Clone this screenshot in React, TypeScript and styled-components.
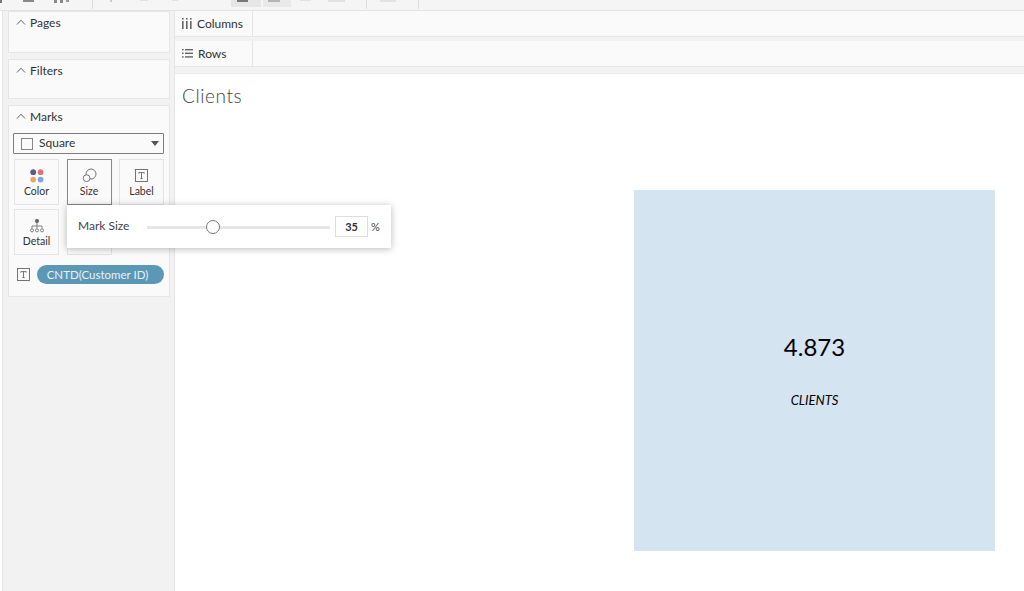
import React from 'react';
import styled, { createGlobalStyle } from 'styled-components';

const GlobalStyle = createGlobalStyle`
  html, body {
    margin: 0;
    padding: 0;
    height: 100%;
    background: #fff;
    font-family: "Lato", "Liberation Sans", sans-serif;
    overflow: hidden;
  }
`;

const Chevron = () => (
  <svg width="10" height="6" viewBox="0 0 10 6" fill="none" stroke="#666" strokeWidth="1">
    <path d="M1 5.5 L5 1.2 L9 5.5" />
  </svg>
);

const ColumnsIcon = () => (
  <svg width="10" height="11" viewBox="0 0 10 11" fill="#666">
    <rect x="0" y="0" width="1.6" height="1.6" />
    <rect x="0" y="3" width="1.6" height="8" />
    <rect x="4" y="0" width="1.6" height="1.6" />
    <rect x="4" y="3" width="1.6" height="8" />
    <rect x="8" y="0" width="1.6" height="1.6" />
    <rect x="8" y="3" width="1.6" height="8" />
  </svg>
);

const RowsIcon = () => (
  <svg width="11" height="9" viewBox="0 0 11 9" fill="#666">
    <rect x="0" y="0" width="1.6" height="1.4" />
    <rect x="3" y="0" width="8" height="1.4" />
    <rect x="0" y="3.6" width="1.6" height="1.4" />
    <rect x="3" y="3.6" width="8" height="1.4" />
    <rect x="0" y="7.2" width="1.6" height="1.4" />
    <rect x="3" y="7.2" width="8" height="1.4" />
  </svg>
);

const ColorIcon = () => (
  <svg width="14" height="14" viewBox="0 0 14 14">
    <circle cx="3.2" cy="3.2" r="2.9" fill="#5b5a8c" />
    <circle cx="10.6" cy="3.2" r="2.9" fill="#e2707a" />
    <circle cx="3.2" cy="10.6" r="2.9" fill="#eda66a" />
    <circle cx="10.6" cy="10.6" r="2.9" fill="#7fa6d6" />
  </svg>
);

const SizeIcon = () => (
  <svg width="15" height="15" viewBox="0 0 15 15" fill="none" stroke="#666" strokeWidth="0.9">
    <circle cx="9" cy="6" r="5" />
    <circle cx="4.6" cy="10.2" r="3.4" fill="#fafafa" />
  </svg>
);

const TextBoxIcon = ({ size }: { size: number }) => (
  <svg width={size} height={size} viewBox="0 0 13 13" fill="none" stroke="#666">
    <rect x="0.5" y="0.5" width="12" height="12" strokeWidth="0.9" />
    <path d="M3.8 4.6 V3.6 H9.2 V4.6 M6.5 3.6 V9.6 M5.3 9.6 H7.7" strokeWidth="0.9" />
  </svg>
);

const DetailIcon = () => (
  <svg width="14" height="14" viewBox="0 0 14 14" fill="none" stroke="#666" strokeWidth="0.8">
    <circle cx="7" cy="2" r="1.7" fill="#666" />
    <path d="M7 3.5 V7 M2 9.6 V7 H12 V9.6 M7 7 V9.6" />
    <circle cx="2" cy="11.4" r="1.5" />
    <circle cx="7" cy="11.4" r="1.5" />
    <circle cx="12" cy="11.4" r="1.5" />
  </svg>
);

export default function App() {
  return (
    <Page>
      <GlobalStyle />
      <Toolbar>
        <Tick $ml={0} $w={2} $h={3} $c="#777" />
        <Tick $ml={21} $w={11} $h={2} $c="#888" />
        <Tick $ml={20} $w={3} $h={3} $c="#888" />
        <Tick $ml={3} $w={3} $h={3} $c="#888" />
        <Tick $ml={3} $w={3} $h={2} $c="#999" />
        <Separator $ml={23} />
        <Tick $ml={17} $w={2} $h={2} $c="#ccc" />
        <Tick $ml={28} $w={8} $h={1} $c="#e2e2e2" />
        <Tick $ml={24} $w={6} $h={1} $c="#e2e2e2" />
        <ToolButton $ml={53} $w={30} $light={false}>
          <Tick $ml={6} $w={11} $h={2} $c="#777" />
        </ToolButton>
        <ToolButton $ml={2} $w={28} $light>
          <Tick $ml={5} $w={12} $h={2} $c="#b5b5b5" />
        </ToolButton>
        <Tick $ml={9} $w={11} $h={1} $c="#e2e2e2" />
        <Tick $ml={17} $w={17} $h={2} $c="#e2e2e2" />
        <Separator $ml={21} />
        <Tick $ml={13} $w={16} $h={2} $c="#e2e2e2" />
        <Separator $ml={22} />
      </Toolbar>
      <Workspace>
        <Gutter />
        <Sidebar>
          <Card $h={42}>
            <CardTitle><Chevron />Pages</CardTitle>
          </Card>
          <Card $h={40}>
            <CardTitle><Chevron />Filters</CardTitle>
          </Card>
          <MarksCard>
            <CardTitle><Chevron />Marks</CardTitle>
            <MarkSelect>
              <SquareBox />
              <SelectText>Square</SelectText>
              <Caret />
            </MarkSelect>
            <MarkGrid>
              <MarkButton>
                <IconSlot><ColorIcon /></IconSlot>
                Color
              </MarkButton>
              <MarkButton $active>
                <IconSlot><SizeIcon /></IconSlot>
                Size
              </MarkButton>
              <MarkButton>
                <IconSlot><TextBoxIcon size={13} /></IconSlot>
                Label
              </MarkButton>
              <MarkButton>
                <IconSlot><DetailIcon /></IconSlot>
                Detail
              </MarkButton>
              <MarkButton />
            </MarkGrid>
            <PillRow>
              <TextBoxIcon size={13} />
              <Pill>CNTD(Customer ID)</Pill>
            </PillRow>
            <SizePopup>
              <PopupLabel>Mark Size</PopupLabel>
              <SliderTrack>
                <SliderThumb />
              </SliderTrack>
              <SizeInput>35</SizeInput>
              <Percent>%</Percent>
            </SizePopup>
          </MarksCard>
        </Sidebar>
        <Main>
          <Shelf>
            <ShelfLabel><ColumnsIcon />Columns</ShelfLabel>
          </Shelf>
          <Shelf>
            <ShelfLabel><RowsIcon />Rows</ShelfLabel>
          </Shelf>
          <Canvas>
            <ViewTitle>Clients</ViewTitle>
            <MarkSquare>
              <BigNumber>4.873</BigNumber>
              <SmallCaption>CLIENTS</SmallCaption>
            </MarkSquare>
          </Canvas>
        </Main>
      </Workspace>
    </Page>
  );
}

const Page = styled.div`
  width: 1024px;
  height: 591px;
  display: flex;
  flex-direction: column;
  overflow: hidden;
  background: #fff;
`;

const Toolbar = styled.div`
  height: 11px;
  box-sizing: border-box;
  flex: none;
  display: flex;
  align-items: flex-start;
  background: #f5f5f5;
  border-bottom: 1px solid #e3e3e3;
`;

const Tick = styled.span<{ $ml: number; $w: number; $h: number; $c: string }>`
  flex: none;
  margin-left: ${(p) => p.$ml}px;
  width: ${(p) => p.$w}px;
  height: ${(p) => p.$h}px;
  background: ${(p) => p.$c};
`;

const Separator = styled.span<{ $ml: number }>`
  flex: none;
  margin-left: ${(p) => p.$ml}px;
  width: 1px;
  height: 9px;
  background: #dcdcdc;
`;

const ToolButton = styled.span<{ $ml: number; $w: number; $light: boolean }>`
  flex: none;
  display: flex;
  margin-left: ${(p) => p.$ml}px;
  width: ${(p) => p.$w}px;
  height: 7px;
  background: ${(p) => (p.$light ? '#e9e9e9' : '#e6e6e6')};
`;

const Workspace = styled.div`
  flex: 1;
  display: flex;
  min-height: 0;
`;

const Gutter = styled.div`
  width: 2px;
  flex: none;
  background: #fff;
`;

const Sidebar = styled.div`
  width: 173px;
  flex: none;
  box-sizing: border-box;
  padding: 0 4px 0 5px;
  display: flex;
  flex-direction: column;
  gap: 6px;
  background: #f2f2f2;
  border-left: 1px solid #e4e4e4;
  border-right: 1px solid #e4e4e4;
`;

const Card = styled.div<{ $h: number }>`
  height: ${(p) => p.$h}px;
  box-sizing: border-box;
  background: #fafafa;
  border: 1px solid #e6e6e6;
`;

const MarksCard = styled.div`
  position: relative;
  height: 192px;
  box-sizing: border-box;
  background: #fafafa;
  border: 1px solid #e6e6e6;
`;

const CardTitle = styled.div`
  height: 20px;
  display: flex;
  align-items: center;
  gap: 4px;
  padding-left: 7px;
  box-sizing: border-box;
  font-size: 12px;
  color: #333;
`;

const MarkSelect = styled.div`
  margin: 7px 5px 0 4px;
  height: 21px;
  box-sizing: border-box;
  display: flex;
  align-items: center;
  padding: 0 4px 0 7px;
  background: #fafafa;
  border: 1px solid #7d7d7d;
  border-radius: 1px;
`;

const SquareBox = styled.span`
  width: 12px;
  height: 12px;
  box-sizing: border-box;
  border: 1px solid #888;
  flex: none;
`;

const SelectText = styled.span`
  flex: 1;
  margin: 0 0 2px 6px;
  font-size: 12px;
  color: #333;
`;

const Caret = styled.span`
  width: 0;
  height: 0;
  border-left: 4px solid transparent;
  border-right: 4px solid transparent;
  border-top: 5px solid #555;
`;

const MarkGrid = styled.div`
  display: grid;
  grid-template-columns: 45px 45px 45px;
  grid-auto-rows: 46px;
  column-gap: 7.5px;
  row-gap: 4px;
  margin: 5px 0 0 5px;
`;

const MarkButton = styled.div<{ $active?: boolean }>`
  box-sizing: border-box;
  display: flex;
  flex-direction: column;
  align-items: center;
  padding-top: 8px;
  font-size: 10.5px;
  color: #333;
  background: #fafafa;
  border: 1px solid ${(p) => (p.$active ? '#8a8a8a' : '#e4e4e4')};
  box-shadow: ${(p) => (p.$active ? '0 1px 1px rgba(0,0,0,0.1)' : 'none')};
`;

const IconSlot = styled.span`
  height: 15px;
  margin-bottom: 2px;
  display: flex;
  align-items: center;
  justify-content: center;
`;

const PillRow = styled.div`
  display: flex;
  align-items: center;
  gap: 7px;
  margin: 10px 5px 0 8px;
`;

const Pill = styled.div`
  flex: 1;
  height: 19px;
  box-sizing: border-box;
  padding-right: 6px;
  border-radius: 10px;
  background: #5b98b5;
  color: #e8f2f7;
  font-size: 11.5px;
  line-height: 19px;
  text-align: center;
`;

const SizePopup = styled.div`
  position: absolute;
  left: 58px;
  top: 99px;
  width: 324px;
  height: 43px;
  box-sizing: border-box;
  display: flex;
  align-items: center;
  padding: 0 11px;
  background: #fff;
  box-shadow: 0 1px 7px rgba(0, 0, 0, 0.28);
  z-index: 2;
`;

const PopupLabel = styled.span`
  width: 69px;
  flex: none;
  margin-bottom: 2px;
  font-size: 12px;
  color: #444;
`;

const SliderTrack = styled.div`
  position: relative;
  width: 183px;
  height: 3px;
  flex: none;
  margin-top: 1px;
  background: #e6e6e6;
`;

const SliderThumb = styled.div`
  position: absolute;
  left: 59px;
  top: -6px;
  width: 14px;
  height: 14px;
  box-sizing: border-box;
  border-radius: 50%;
  background: #fff;
  border: 1px solid #777;
`;

const SizeInput = styled.div`
  width: 33px;
  height: 21px;
  flex: none;
  margin-left: 5px;
  box-sizing: border-box;
  border: 1px solid #ddd;
  font-size: 11px;
  font-weight: 700;
  color: #333;
  line-height: 19px;
  text-align: right;
  padding-right: 9px;
`;

const Percent = styled.span`
  margin-left: 3px;
  font-size: 11px;
  color: #444;
`;

const Main = styled.div`
  flex: 1;
  min-width: 0;
  display: flex;
  flex-direction: column;
  background: #f2f2f2;
`;

const Shelf = styled.div`
  height: 26px;
  flex: none;
  margin-bottom: 4px;
  box-sizing: border-box;
  background: #fafafa;
  border-bottom: 1px solid #e6e6e6;
  display: flex;
`;

const ShelfLabel = styled.div`
  width: 78px;
  box-sizing: border-box;
  display: flex;
  align-items: center;
  gap: 5px;
  padding-left: 7px;
  font-size: 12px;
  color: #333;
  border-right: 1px solid #e6e6e6;
`;

const Canvas = styled.div`
  flex: 1;
  margin-top: 2px;
  display: flex;
  flex-direction: column;
  background: #fff;
  border-top: 1px solid #ececec;
`;

const ViewTitle = styled.div`
  height: 116px;
  box-sizing: border-box;
  padding: 10px 0 0 7px;
  font-size: 19px;
  font-weight: 300;
  color: #444;
  letter-spacing: 0.6px;
`;

const MarkSquare = styled.div`
  align-self: flex-end;
  width: 361px;
  height: 361px;
  margin-right: 29px;
  display: flex;
  flex-direction: column;
  align-items: center;
  background: #d5e4f1;
  color: #000;
`;

const BigNumber = styled.div`
  margin-top: 141px;
  font-size: 24px;
  line-height: 32px;
`;

const SmallCaption = styled.div`
  margin-top: 29px;
  font-size: 13px;
  font-style: italic;
  line-height: 16px;
`;
